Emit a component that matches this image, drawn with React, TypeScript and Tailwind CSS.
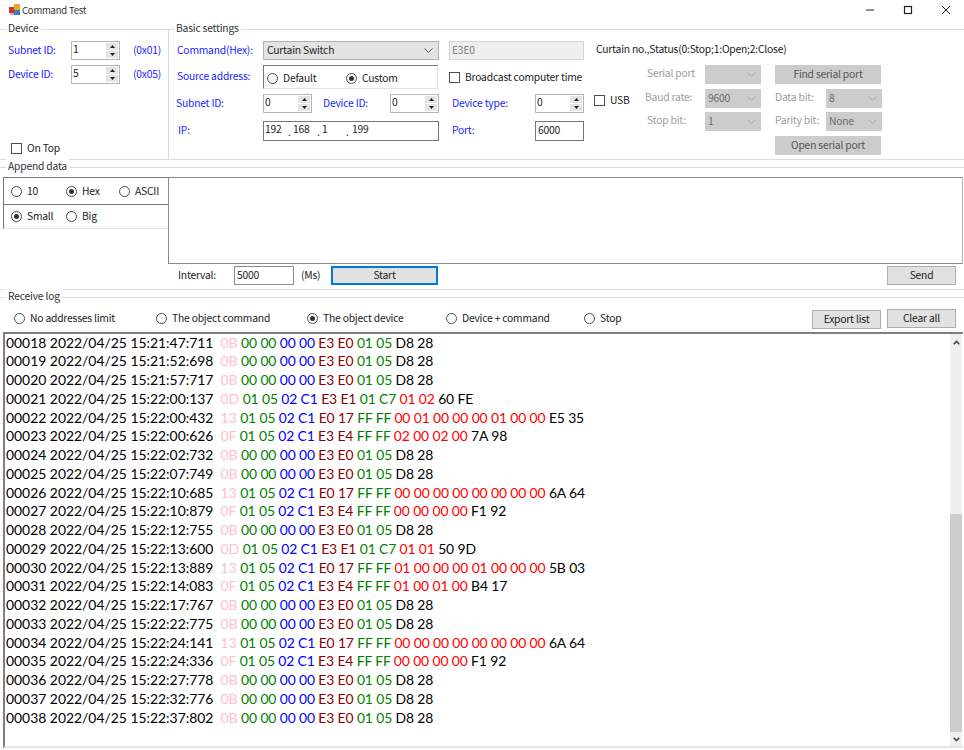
import React from "react";

type Kind = "a" | "d" | "t" | "f";
type Row = [string, string, Kind, string?, string?];

const rows: Row[] = [
  ["00018", "15:21:47:711", "a"],
  ["00019", "15:21:52:698", "a"],
  ["00020", "15:21:57:717", "a"],
  ["00021", "15:22:00:137", "d", "01 02", "60 FE"],
  ["00022", "15:22:00:432", "t", "00 01 00 00 00 01 00 00", "E5 35"],
  ["00023", "15:22:00:626", "f", "02 00 02 00", "7A 98"],
  ["00024", "15:22:02:732", "a"],
  ["00025", "15:22:07:749", "a"],
  ["00026", "15:22:10:685", "t", "00 00 00 00 00 00 00 00", "6A 64"],
  ["00027", "15:22:10:879", "f", "00 00 00 00", "F1 92"],
  ["00028", "15:22:12:755", "a"],
  ["00029", "15:22:13:600", "d", "01 01", "50 9D"],
  ["00030", "15:22:13:889", "t", "01 00 00 00 01 00 00 00", "5B 03"],
  ["00031", "15:22:14:083", "f", "01 00 01 00", "B4 17"],
  ["00032", "15:22:17:767", "a"],
  ["00033", "15:22:22:775", "a"],
  ["00034", "15:22:24:141", "t", "00 00 00 00 00 00 00 00", "6A 64"],
  ["00035", "15:22:24:336", "f", "00 00 00 00", "F1 92"],
  ["00036", "15:22:27:778", "a"],
  ["00037", "15:22:32:776", "a"],
  ["00038", "15:22:37:802", "a"],
];

function LogRow({ r }: { r: Row }) {
  const [id, time, kind, pay, chk] = r;
  return (
    <div className="h-[18.75px] leading-[18.75px] whitespace-pre text-black">
      <span>{id} 2022/04/25 {time} </span>
      {kind === "a" && (
        <>
          <span className="text-[#ffc0cb]"> 0B </span>
          <span className="tracking-[-0.12px]">
            <span className="text-[#008000]">00 00 </span>
            <span className="text-[#0000ff]">00 00 </span>
            <span className="text-[#8b0000]">E3 E0 </span>
            <span className="text-[#008000]">01 05 </span>
            <span>D8 28</span>
          </span>
        </>
      )}
      {kind !== "a" && (
        <>
          <span className="text-[#ffc0cb]"> {kind === "d" ? "0D" : kind === "t" ? "13" : "0F"} </span>
          <span className="tracking-[-0.12px]">
            <span className="text-[#008000]">01 05 </span>
            <span className="text-[#0000ff]">02 C1 </span>
            <span className="text-[#8b0000]">{kind === "d" ? "E3 E1" : kind === "t" ? "E0 17" : "E3 E4"} </span>
            <span className="text-[#008000]">{kind === "d" ? "01 C7" : "FF FF"} </span>
            <span className="text-[#ff0000]">{pay} </span>
            <span>{chk}</span>
          </span>
        </>
      )}
    </div>
  );
}

function Radio({ on, label, className = "" }: { on?: boolean; label: string; className?: string }) {
  return (
    <span className={`inline-flex items-center gap-[5px] whitespace-nowrap ${className}`}>
      <span className="w-[11px] h-[11px] rounded-full border border-[#4d4d4d] bg-white flex items-center justify-center shrink-0">
        {on && <span className="w-[5px] h-[5px] rounded-full bg-[#333]" />}
      </span>
      <span className="pb-[1px]">{label}</span>
    </span>
  );
}

function Check({ label }: { label: string }) {
  return (
    <span className="inline-flex items-center gap-[5px] whitespace-nowrap">
      <span className="w-[11px] h-[11px] border border-[#4d4d4d] bg-white shrink-0" />
      <span className="pb-[1px]">{label}</span>
    </span>
  );
}

function Spin({ value, w }: { value: string; w: string }) {
  return (
    <div className={`${w} h-[19px] border border-[#b4b4b4] bg-white flex shrink-0`}>
      <span className="flex-1 pl-[1px] leading-[13px]">{value}</span>
      <span className="w-[12px] my-[1px] mr-[1px] flex flex-col gap-[1px]">
        <span className="flex-1 bg-[#e4e4e4] flex items-center justify-center">
          <svg width="5" height="3" viewBox="0 0 5 3"><path d="M2.5 0 5 3H0z" fill="#222" /></svg>
        </span>
        <span className="flex-1 bg-[#e4e4e4] flex items-center justify-center">
          <svg width="5" height="3" viewBox="0 0 5 3"><path d="M0 0h5L2.5 3z" fill="#222" /></svg>
        </span>
      </span>
    </div>
  );
}

function Chevron({ color = "#555" }: { color?: string }) {
  return (
    <svg width="9" height="5" viewBox="0 0 9 5" className="shrink-0">
      <path d="M.5.5l4 4 4-4" fill="none" stroke={color} strokeWidth="1" />
    </svg>
  );
}

function GraySelect({ value, w }: { value: string; w: string }) {
  return (
    <div className={`${w} h-[19px] bg-[#cccccc] flex items-center justify-between pl-[3px] pr-[2px] text-[#6d6d6d] shrink-0`}>
      <span className="pb-[1px]">{value}</span>
      <span className="pr-[3px]"><Chevron color="#aaa" /></span>
    </div>
  );
}

function GrayBtn({ label }: { label: string }) {
  return (
    <div className="w-[106px] h-[19px] pb-[1px] bg-[#cccccc] flex items-center justify-center text-[#555] shrink-0">{label}</div>
  );
}

function Btn({ label, w, h = "h-[19px]" }: { label: string; w: string; h?: string }) {
  return (
    <div className={`${w} ${h} pb-[1px] bg-[#e1e1e1] border border-[#adadad] flex items-center justify-center shrink-0`}>{label}</div>
  );
}

const blue = "text-[#2323ff] whitespace-nowrap shrink-0 pb-[2px]";
const grayLabel = "pb-[3px]";

export default function App() {
  return (
    <div className="w-[964px] h-[750px] bg-white overflow-hidden text-[10.3px] tracking-[-0.2px] leading-[14px] text-[#222] font-['Noto_Sans_CJK_SC','Noto_Sans',sans-serif]">
      {/* Title bar */}
      <div className="h-[20px] flex items-center">
        <svg width="11" height="12" viewBox="0 0 11 12" className="ml-[9px] mr-[2px]">
          <rect x="0" y="3" width="5" height="6" fill="#d0342c" />
          <rect x="5" y="0" width="6" height="6" fill="#e8a820" />
          <rect x="5" y="6" width="6" height="5" fill="#3f78c8" />
          <rect x="1" y="9" width="4" height="2" fill="#b8b8b8" />
        </svg>
        <span className="text-[9.5px] text-[#333] pb-[1px]">Command Test</span>
        <div className="ml-auto flex items-center text-[#222]">
          <svg width="10" height="10" viewBox="0 0 10 10" className="mr-[28px]"><path d="M1 5h8" stroke="#222" strokeWidth="1" /></svg>
          <svg width="10" height="10" viewBox="0 0 10 10" className="mr-[28px]"><rect x="1.5" y="1.5" width="7" height="7" fill="none" stroke="#222" strokeWidth="1.2" /></svg>
          <svg width="10" height="10" viewBox="0 0 10 10" className="mr-[13px]"><path d="M1 1l8 8M9 1l-8 8" stroke="#222" strokeWidth="1" /></svg>
        </div>
      </div>

      {/* Top groups */}
      <div className="h-[131px] mt-[9px] border-t border-b border-[#dcdcdc] flex">
        <div className="w-[169px] border-r border-[#dcdcdc] flex flex-col relative pl-[8px]">
          <span className="absolute -top-[9px] left-[6px] bg-white px-[2px] text-[#333]">Device</span>
          <div className="flex items-center h-[19px] mt-[11px]">
            <span className={`w-[63px] ${blue}`}>Subnet ID:</span>
            <Spin value="1" w="w-[49px]" />
            <span className={`ml-[13px] ${blue}`}>(0x01)</span>
          </div>
          <div className="flex items-center h-[19px] mt-[5px]">
            <span className={`w-[63px] ${blue}`}>Device ID:</span>
            <Spin value="5" w="w-[49px]" />
            <span className={`ml-[13px] ${blue}`}>(0x05)</span>
          </div>
          <div className="mt-auto mb-[2px] ml-[3px]"><Check label="On Top" /></div>
        </div>

        <div className="flex-1 relative flex pl-[7px]">
          <span className="absolute -top-[9px] left-[5px] bg-white px-[2px] text-[#333]">Basic settings</span>
          <div className="w-[408px] flex flex-col pt-[11px]">
            <div className="flex items-center h-[19px]">
              <span className={`w-[87px] pl-[1px] ${blue}`}>Command(Hex):</span>
              <div className="w-[176px] h-[19px] bg-[#e3e3e3] border border-[#b0b0b0] flex items-center justify-between px-[3px] pr-[5px] shrink-0">
                <span className="pb-[2px]">Curtain Switch</span>
                <Chevron />
              </div>
              <div className="ml-[10px] w-[135px] h-[19px] bg-[#efefef] border border-[#d5d5d5] pl-[2px] pb-[2px] flex items-center text-[#7a7a7a]">E3E0</div>
            </div>
            <div className="flex items-center h-[24px] mt-[5px]">
              <span className={`w-[87px] pl-[1px] ${blue}`}>Source address:</span>
              <div className="w-[175px] h-[24px] border-l border-t border-l-[#777] border-t-[#777] border-r border-b border-r-[#e4e4e4] border-b-[#e4e4e4] flex items-center pl-[3px] pt-[3px] shrink-0">
                <Radio label="Default" className="w-[79px]" />
                <Radio on label="Custom" />
              </div>
              <div className="ml-[11px] pt-[1px]"><Check label="Broadcast computer time" /></div>
            </div>
            <div className="flex items-center h-[19px] mt-[5px]">
              <span className={`w-[87px] ${blue}`}>Subnet ID:</span>
              <Spin value="0" w="w-[49px]" />
              <span className={`w-[78px] pl-[11px] ${blue}`}>Device ID:</span>
              <Spin value="0" w="w-[49px]" />
              <span className={`w-[96px] pl-[13px] ${blue}`}>Device type:</span>
              <Spin value="0" w="w-[49px]" />
            </div>
            <div className="flex items-center h-[20px] mt-[8px]">
              <span className={`w-[87px] pl-[2px] ${blue}`}>IP:</span>
              <div className="w-[176px] h-[20px] border border-[#767676] flex pl-[1px] shrink-0 leading-[13px]">
                <span className="w-[23px]">192</span>
                <span className="w-[5px] pt-[3px]">.</span>
                <span className="w-[24px]">168</span>
                <span className="w-[5px] pt-[3px]">.</span>
                <span className="w-[24px]">1</span>
                <span className="w-[6px] pt-[3px]">.</span>
                <span>199</span>
              </div>
              <span className={`w-[96px] pl-[13px] ${blue}`}>Port:</span>
              <div className="w-[49px] h-[20px] border border-[#767676] pl-[2px] pb-[2px] flex items-center">6000</div>
            </div>
          </div>

          <div className="flex flex-col ml-[10px]">
            <div className="h-[14px] mt-[12px] pl-[2px] text-[#222] whitespace-nowrap">Curtain no.,Status(0:Stop;1:Open;2:Close)</div>
            <div className="flex mt-[9px]">
              <div className="w-[53px] pt-[28px]"><Check label="USB" /></div>
              <div className="flex flex-col gap-[4.5px] text-[#9c9c9c] whitespace-nowrap">
                <div className="flex items-center">
                  <span className={`w-[58px] ${grayLabel}`}>Serial port</span>
                  <GraySelect value="" w="w-[56px]" />
                  <span className="w-[14px]" />
                  <GrayBtn label="Find serial port" />
                </div>
                <div className="flex items-center">
                  <span className={`w-[58px] -ml-[2px] mr-[2px] ${grayLabel}`}>Baud rate:</span>
                  <GraySelect value="9600" w="w-[56px]" />
                  <span className="w-[14px]" />
                  <span className={`w-[51px] ${grayLabel}`}>Data bit:</span>
                  <GraySelect value="8" w="w-[56px]" />
                </div>
                <div className="flex items-center">
                  <span className={`w-[58px] ${grayLabel}`}>Stop bit:</span>
                  <GraySelect value="1" w="w-[56px]" />
                  <span className="w-[14px]" />
                  <span className={`w-[51px] ${grayLabel}`}>Parity bit:</span>
                  <GraySelect value="None" w="w-[56px]" />
                </div>
                <div className="flex items-center">
                  <span className="w-[128px]" />
                  <GrayBtn label="Open serial port" />
                </div>
              </div>
            </div>
          </div>
        </div>
      </div>

      {/* Append data */}
      <div className="h-[123px] mt-[7px] border-t border-b border-[#dcdcdc] relative">
        <span className="absolute -top-[9px] left-[6px] bg-white px-[2px] text-[#333]">Append data</span>
        <div className="flex pt-[9px]">
          <div className="w-[165px] ml-[3px] flex flex-col shrink-0">
            <div className="h-[27px] border-l border-t border-l-[#777] border-t-[#777] flex items-center pl-[7px]">
              <Radio label="10" className="w-[55px]" />
              <Radio on label="Hex" className="w-[53px]" />
              <Radio label="ASCII" />
            </div>
            <div className="h-[25px] border-l border-t border-b border-l-[#777] border-t-[#777] border-b-[#e4e4e4] flex items-center pl-[7px]">
              <Radio on label="Small" className="w-[55px]" />
              <Radio label="Big" />
            </div>
          </div>
          <div className="w-[795px] h-[87px] border border-t-[#8a8a8a] border-l-[#8a8a8a] border-b-[#8a8a8a] border-r-[#b5b5b5] bg-white" />
        </div>
        <div className="flex items-center h-[19px] mt-[2px]">
          <span className="ml-[178px] w-[56px] pb-[2px]">Interval:</span>
          <div className="w-[60px] h-[19px] border border-[#8a8a8a] pl-[2px] pb-[2px] flex items-center">5000</div>
          <span className="ml-[7px] w-[30px] pb-[2px]">(Ms)</span>
          <div className="w-[107px] h-[19px] pb-[1px] bg-[#e1e1e1] border-2 border-[#0078d7] flex items-center justify-center">Start</div>
          <span className="flex-1" />
          <Btn label="Send" w="w-[69px]" />
          <span className="w-[8px]" />
        </div>
      </div>

      {/* Receive log */}
      <div className="mt-[7px] border-t border-[#dcdcdc] relative flex flex-col h-[453px]">
        <span className="absolute -top-[9px] left-[6px] bg-white px-[2px] text-[#333]">Receive log</span>
        <div className="h-[34px] pt-[7px] flex items-center pl-[14px]">
          <Radio label="No addresses limit" className="w-[142px]" />
          <Radio label="The object command" className="w-[151px]" />
          <Radio on label="The object device" className="w-[139px]" />
          <Radio label="Device + command" className="w-[138px]" />
          <Radio label="Stop" />
          <span className="flex-1" />
          <div className="flex items-start gap-[6px] mr-[8px] mt-[1px]">
            <Btn label="Export list" w="w-[69px]" />
            <div className="-mt-[1px]"><Btn label="Clear all" w="w-[69px]" /></div>
          </div>
        </div>
        <div className="ml-[3px] w-[960px] h-[416px] border-t-2 border-l-2 border-t-[#7f7f7f] border-l-[#7f7f7f] border-b-2 border-b-[#e6e6e6] flex">
          <div className="flex-1 pl-[1px] -mt-[0.5px] text-[13.9px] tracking-normal text-black font-['Lato','Liberation_Sans',sans-serif]">
            {rows.map((r) => (
              <LogRow key={r[0]} r={r} />
            ))}
          </div>
          <div className="w-[12px] mr-[1px] bg-[#f0f0f0] flex flex-col items-center">
            <div className="h-[16px] flex items-center justify-center shrink-0">
              <svg width="7" height="5" viewBox="0 0 7 5"><path d="M.7 4.3 3.5 1.5l2.8 2.8" fill="none" stroke="#444" strokeWidth="1.6" /></svg>
            </div>
            <div className="h-[164px] shrink-0" />
            <div className="flex-1 w-full bg-[#cdcdcd]" />
            <div className="h-[14px] flex items-center justify-center shrink-0">
              <svg width="7" height="5" viewBox="0 0 7 5"><path d="M.7.7 3.5 3.5 6.3.7" fill="none" stroke="#444" strokeWidth="1.6" /></svg>
            </div>
          </div>
        </div>
      </div>
    </div>
  );
}
